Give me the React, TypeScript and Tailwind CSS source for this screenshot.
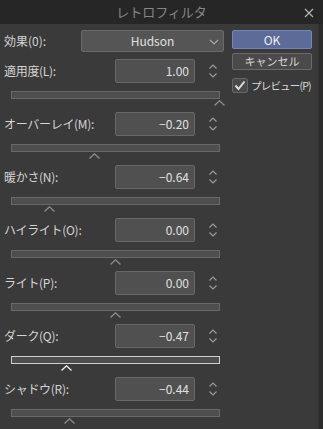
import React from 'react';

const font = { fontFamily: '"Noto Sans CJK JP", "Noto Sans", sans-serif' };

const params = [
  { label: '適用度(L):', value: '1.00', pos: 1 },
  { label: 'オーバーレイ(M):', value: '−0.20', pos: 0.4 },
  { label: '暖かさ(N):', value: '−0.64', pos: 0.18 },
  { label: 'ハイライト(O):', value: '0.00', pos: 0.5 },
  { label: 'ライト(P):', value: '0.00', pos: 0.5 },
  { label: 'ダーク(Q):', value: '−0.47', pos: 0.265, active: true },
  { label: 'シャドウ(R):', value: '−0.44', pos: 0.28 },
];

const Spinner = () => (
  <svg width="10" height="16" viewBox="0 0 10 16" className="ml-[13px]">
    <polyline points="1.5,5.5 5,2 8.5,5.5" fill="none" stroke="#9a9a9a" strokeWidth="1.2" />
    <polyline points="1.5,10.5 5,14 8.5,10.5" fill="none" stroke="#9a9a9a" strokeWidth="1.2" />
  </svg>
);

const Param = ({ label, value, pos, active }: { label: string; value: string; pos: number; active?: boolean }) => (
  <div className="mb-[13px]">
    <div className="flex items-center h-[24px]">
      <span className="w-[111px] text-[12px] text-[#d4d4d4] tracking-[-0.3px]">{label}</span>
      <div className="w-[80px] h-[24px] bg-[#505050] border border-[#686868] rounded-[2px] flex items-center justify-end pr-[5px] text-[12px] text-[#e0e0e0]">
        {value}
      </div>
      <Spinner />
    </div>
    <div
      className={`relative mt-[8px] ml-[7px] w-[209px] h-[8px] bg-[#4e4e4e] border ${
        active ? 'border-[#cfcfcf]' : 'border-[#686868]'
      }`}
    >
      <svg
        width="11"
        height="6"
        viewBox="0 0 11 6"
        className="absolute top-[8px]"
        style={{ left: `${pos * 207 - 5.5}px` }}
      >
        <polyline
          points="0.5,5.5 5.5,0.8 10.5,5.5"
          fill="none"
          stroke={active ? '#f0f0f0' : '#8c8c8c'}
          strokeWidth="1.3"
        />
      </svg>
    </div>
  </div>
);

export default function App() {
  return (
    <div className="w-[323px] h-[429px] bg-[#3a3a3a] flex flex-col overflow-hidden" style={font}>
      <div className="relative h-[24px] bg-[#262626] flex items-center justify-center shrink-0">
        <span className="text-[13px] text-[#868686]">レトロフィルタ</span>
        <svg width="10" height="10" viewBox="0 0 10 10" className="absolute right-[9px] top-[8px]">
          <path d="M1 1L9 9M9 1L1 9" stroke="#b4b4b4" strokeWidth="1.2" />
        </svg>
      </div>
      <div className="flex flex-1">
        <div className="flex-1 flex">
          <div className="w-[228px] pl-[4px] pt-[6px]">
            <div className="flex items-center h-[22px] mb-[7px]">
              <span className="w-[77px] text-[12px] text-[#d4d4d4]">効果(0):</span>
              <div className="relative w-[143px] h-[22px] bg-[#555555] border border-[#6a6a6a] rounded-[2px] flex items-center justify-center text-[12px] text-[#e0e0e0]">
                Hudson
                <svg width="10" height="6" viewBox="0 0 10 6" className="absolute right-[4px] top-[8px]">
                  <polyline points="1,1 5,5 9,1" fill="none" stroke="#a8a8a8" strokeWidth="1.2" />
                </svg>
              </div>
            </div>
            {params.map((p) => (
              <Param key={p.label} {...p} />
            ))}
          </div>
          <div className="pt-[6px] pl-[4px] flex flex-col w-[84px]">
            <button className="w-[80px] h-[19px] bg-[#5c6b98] border border-[#7585b3] rounded-[2px] text-[12px] leading-none text-[#f2f2f2]">
              OK
            </button>
            <button className="mt-[4px] w-[80px] h-[17px] bg-[#4a4a4a] border border-[#6a6a6a] rounded-[2px] text-[11px] leading-none text-[#d8d8d8]">
              キャンセル
            </button>
            <div className="mt-[8px] flex items-center whitespace-nowrap">
              <div className="shrink-0 w-[16px] h-[15px] bg-[#4a4a4a] border border-[#666666] rounded-[2px] flex items-center justify-center">
                <svg width="12" height="11" viewBox="0 0 12 11">
                  <polyline points="1.5,5.5 4.5,9 10.5,1.5" fill="none" stroke="#dedede" strokeWidth="2" />
                </svg>
              </div>
              <span className="ml-[3px] text-[10.5px] tracking-[-0.8px] text-[#d8d8d8]">プレビュー(P)</span>
            </div>
          </div>
        </div>
        <div className="w-[5px] bg-[#2c2c2c] border-l border-[#333333]" />
      </div>
    </div>
  );
}
